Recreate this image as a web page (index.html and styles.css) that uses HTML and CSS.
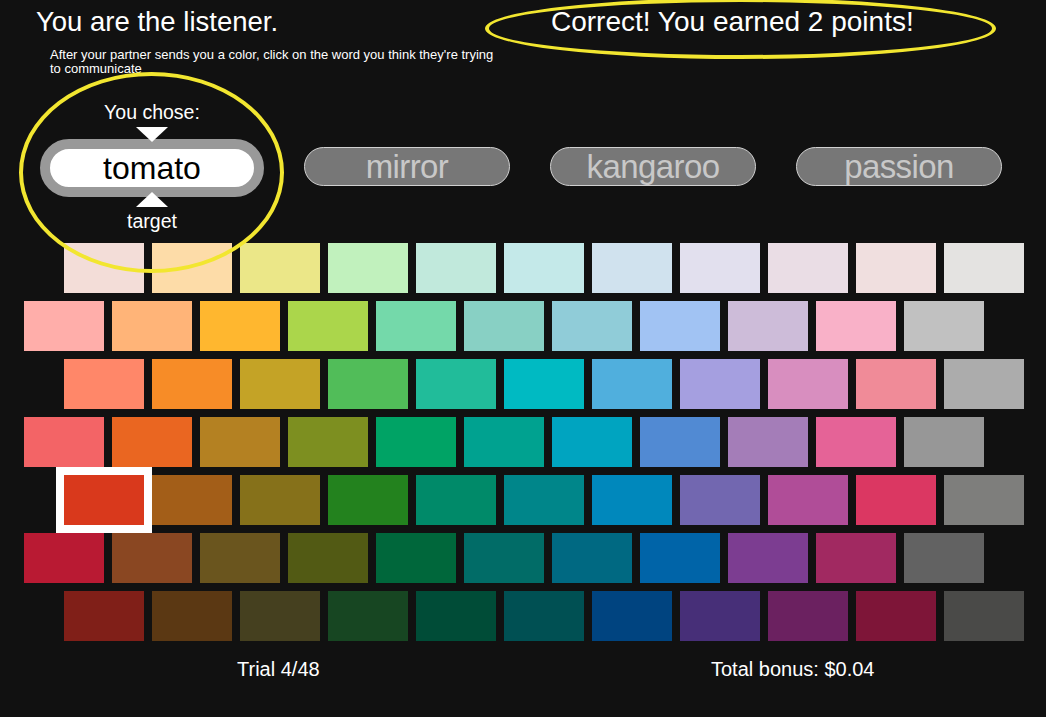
FILE: index.html
```html
<!DOCTYPE html>
<html>
<head>
<meta charset="utf-8">
<link rel="stylesheet" href="styles.css">
</head>
<body>
<div class="page">
  <header class="header">
    <h1 class="title">You are the listener.</h1>
    <div class="feedback">Correct! You earned 2 points!</div>
  </header>
  <p class="instructions">After your partner sends you a color, click on the word you think they're trying to communicate</p>

  <div class="choices">
    <div class="chosen-col">
      <div class="tag">You chose:</div>
      <div class="tri tri-down"></div>
      <div class="pill pill-chosen">tomato</div>
      <div class="tri tri-up"></div>
      <div class="tag">target</div>
    </div>
    <div class="pill">mirror</div>
    <div class="pill">kangaroo</div>
    <div class="pill">passion</div>
  </div>

  <div class="grid">
    <div class="row row-in">
      <div class="cell" style="background:#f3ddd8"></div>
      <div class="cell" style="background:#fddca8"></div>
      <div class="cell" style="background:#ebe788"></div>
      <div class="cell" style="background:#c1f1bd"></div>
      <div class="cell" style="background:#c1e9dc"></div>
      <div class="cell" style="background:#c4e9e9"></div>
      <div class="cell" style="background:#d0e2ee"></div>
      <div class="cell" style="background:#e2e0ee"></div>
      <div class="cell" style="background:#eadde5"></div>
      <div class="cell" style="background:#f0dfdf"></div>
      <div class="cell" style="background:#e4e3e1"></div>
    </div>
    <div class="row row-out">
      <div class="cell" style="background:#ffaeaa"></div>
      <div class="cell" style="background:#ffb478"></div>
      <div class="cell" style="background:#ffb72f"></div>
      <div class="cell" style="background:#abd64b"></div>
      <div class="cell" style="background:#74d9aa"></div>
      <div class="cell" style="background:#88d0c4"></div>
      <div class="cell" style="background:#90ccd8"></div>
      <div class="cell" style="background:#a1c3f3"></div>
      <div class="cell" style="background:#cdbcd9"></div>
      <div class="cell" style="background:#f9b1c8"></div>
      <div class="cell" style="background:#c1c1c1"></div>
    </div>
    <div class="row row-in">
      <div class="cell" style="background:#ff8769"></div>
      <div class="cell" style="background:#f78c27"></div>
      <div class="cell" style="background:#c4a326"></div>
      <div class="cell" style="background:#51bd59"></div>
      <div class="cell" style="background:#21bc9a"></div>
      <div class="cell" style="background:#00bac2"></div>
      <div class="cell" style="background:#50afdd"></div>
      <div class="cell" style="background:#a59fe0"></div>
      <div class="cell" style="background:#d88ebf"></div>
      <div class="cell" style="background:#f08b98"></div>
      <div class="cell" style="background:#acacac"></div>
    </div>
    <div class="row row-out">
      <div class="cell" style="background:#f36466"></div>
      <div class="cell" style="background:#ea6621"></div>
      <div class="cell" style="background:#b48122"></div>
      <div class="cell" style="background:#7d8f20"></div>
      <div class="cell" style="background:#00a365"></div>
      <div class="cell" style="background:#00a290"></div>
      <div class="cell" style="background:#00a4c0"></div>
      <div class="cell" style="background:#518ad3"></div>
      <div class="cell" style="background:#a47db8"></div>
      <div class="cell" style="background:#e56397"></div>
      <div class="cell" style="background:#979797"></div>
    </div>
    <div class="row row-in">
      <div class="cell cell-selected" style="background:#d9391c"></div>
      <div class="cell" style="background:#a35e18"></div>
      <div class="cell" style="background:#86711a"></div>
      <div class="cell" style="background:#23821e"></div>
      <div class="cell" style="background:#008a69"></div>
      <div class="cell" style="background:#00868a"></div>
      <div class="cell" style="background:#0088bc"></div>
      <div class="cell" style="background:#7267b0"></div>
      <div class="cell" style="background:#b04d98"></div>
      <div class="cell" style="background:#db3762"></div>
      <div class="cell" style="background:#7e7e7c"></div>
    </div>
    <div class="row row-out">
      <div class="cell" style="background:#b91a33"></div>
      <div class="cell" style="background:#8a4722"></div>
      <div class="cell" style="background:#6a551e"></div>
      <div class="cell" style="background:#525a14"></div>
      <div class="cell" style="background:#00673b"></div>
      <div class="cell" style="background:#016c67"></div>
      <div class="cell" style="background:#006982"></div>
      <div class="cell" style="background:#0064a8"></div>
      <div class="cell" style="background:#7c3d91"></div>
      <div class="cell" style="background:#a12961"></div>
      <div class="cell" style="background:#626262"></div>
    </div>
    <div class="row row-in">
      <div class="cell" style="background:#801f18"></div>
      <div class="cell" style="background:#5b3813"></div>
      <div class="cell" style="background:#45401f"></div>
      <div class="cell" style="background:#174622"></div>
      <div class="cell" style="background:#004c37"></div>
      <div class="cell" style="background:#005053"></div>
      <div class="cell" style="background:#004480"></div>
      <div class="cell" style="background:#472f78"></div>
      <div class="cell" style="background:#6b2160"></div>
      <div class="cell" style="background:#7e1538"></div>
      <div class="cell" style="background:#4a4a48"></div>
    </div>
  </div>

  <footer class="footer">
    <span class="trial">Trial 4/48</span>
    <span class="bonus">Total bonus: $0.04</span>
  </footer>

  <div class="ring ring-feedback"></div>
  <div class="ring ring-choice"></div>
</div>
</body>
</html>
```

FILE: styles.css
```css
* { box-sizing: border-box; }

html, body {
  margin: 0;
  padding: 0;
  background: #111111;
}

body {
  font-family: "Liberation Sans", Arial, Helvetica, sans-serif;
  color: #ffffff;
  width: 1046px;
  height: 717px;
  overflow: hidden;
}

.page {
  position: relative;
  width: 1046px;
  height: 717px;
}

.header {
  display: flex;
  align-items: flex-start;
  padding: 5px 0 0 36px;
  height: 39px;
}

.title {
  margin: 0;
  width: 515px;
  flex: none;
  font-size: 27.5px;
  font-weight: normal;
  line-height: 34px;
  white-space: nowrap;
}

.feedback {
  font-size: 28px;
  line-height: 34px;
  white-space: nowrap;
}

.instructions {
  margin: 9px 0 0 50px;
  width: 450px;
  font-size: 13px;
  line-height: 14px;
}

.choices {
  display: flex;
  align-items: center;
  gap: 40px;
  margin-top: 25px;
  padding-left: 40px;
}

.chosen-col {
  display: flex;
  flex-direction: column;
  align-items: center;
  width: 224px;
}

.tag {
  font-size: 19.5px;
  line-height: 22px;
  white-space: nowrap;
}

.tri {
  position: relative;
  z-index: 2;
  width: 0;
  height: 0;
  border-left: 16px solid transparent;
  border-right: 16px solid transparent;
}

.tri-down {
  border-top: 15px solid #ffffff;
  margin-top: 4px;
  margin-bottom: -3px;
}

.tri-up {
  border-bottom: 15px solid #ffffff;
  margin-top: -5px;
  margin-bottom: 3px;
}

.pill {
  width: 206px;
  height: 39px;
  border: 1px solid #d0d0d0;
  border-radius: 20px;
  background: #777777;
  color: #c8c8c8;
  font-size: 33px;
  letter-spacing: -0.6px;
  line-height: 37px;
  text-align: center;
}

.pill-chosen {
  width: 224px;
  height: 58px;
  border: 10px solid #999999;
  border-radius: 29px;
  background: #ffffff;
  color: #000000;
  font-size: 32px;
  letter-spacing: 0;
  line-height: 38px;
}

.grid {
  display: flex;
  flex-direction: column;
  gap: 8px;
  margin-top: 11px;
}

.row {
  display: flex;
  gap: 8px;
}

.row-in { padding-left: 64px; }
.row-out { padding-left: 24px; }

.cell {
  width: 80px;
  height: 50px;
  flex: none;
}

.cell-selected {
  outline: 8px solid #ffffff;
}

.footer {
  display: grid;
  grid-template-columns: 474px auto;
  margin-top: 16px;
  padding-left: 237px;
  font-size: 20px;
  line-height: 24px;
}

.ring {
  position: absolute;
  border: 4px solid #f2e630;
  border-radius: 50%;
  pointer-events: none;
  filter: blur(0.4px);
}

.ring-feedback {
  left: 485px;
  top: -2px;
  width: 511px;
  height: 61px;
}

.ring-choice {
  left: 19px;
  top: 72px;
  width: 265px;
  height: 201px;
}
```
